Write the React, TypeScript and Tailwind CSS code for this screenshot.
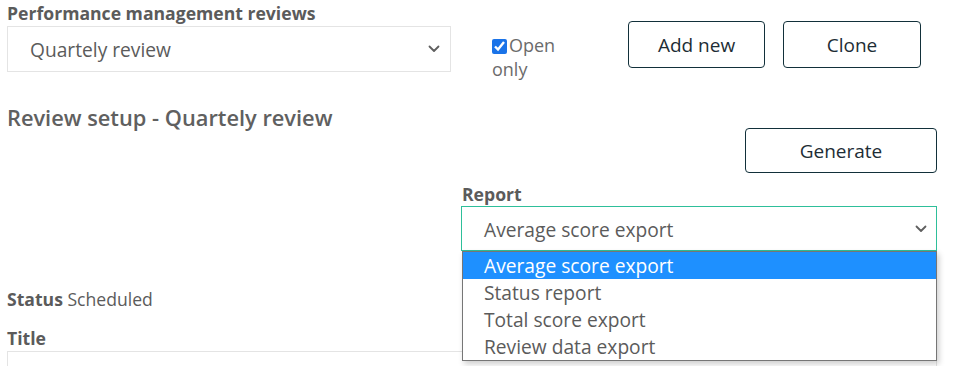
function Chevron() {
  return (
    <svg width="12" height="8" viewBox="0 0 12 8" fill="none" stroke="#5f5f5f" strokeWidth="1.8" strokeLinecap="round" strokeLinejoin="round">
      <path d="M1.5 1.5L6 6l4.5-4.5" />
    </svg>
  );
}

const reports = ["Average score export", "Status report", "Total score export", "Review data export"];

export default function App() {
  return (
    <div className="relative h-[366px] overflow-hidden bg-white pl-[7px] pr-[22px] font-['Open_Sans',sans-serif] text-[#5b5b5b]">
      {/* top row */}
      <div className="flex items-start">
        <div className="w-[444px] pt-[1px]">
          <div className="text-[17.6px] font-bold leading-[24px]">Performance management reviews</div>
          <div className="mt-px flex h-[46px] items-center justify-between border border-[#e4e4e4] pl-[22px] pr-[10px] text-[19.2px]">
            <span className="pt-[3px]">Quartely review</span>
            <Chevron />
          </div>
        </div>
        <div className="ml-[41px] mt-[33px] w-[72px] text-[18px] leading-[24px] text-[#6b6b6b]">
          <input type="checkbox" defaultChecked className="mr-[2px] h-[15px] w-[15px] align-[-2px] accent-[#1a73e8]" />
          Open only
        </div>
        <button className="ml-[64px] mt-[21px] h-[47px] w-[137px] rounded-[4px] border border-[#12303a] pt-[2px] text-[19px] text-[#1d2d35]">
          Add new
        </button>
        <button className="ml-[18px] mt-[21px] h-[47px] w-[138px] rounded-[4px] border border-[#12303a] pt-[2px] text-[19px] text-[#1d2d35]">
          Clone
        </button>
      </div>

      {/* review setup */}
      <div className="mt-[23px] flex items-start">
        <div className="flex-1 text-[21.8px] font-semibold leading-[28px] text-[#606060]">Review setup - Quartely review</div>
        <div className="flex w-[476px] flex-col">
          <button className="mt-[24px] h-[45px] w-[192px] self-end rounded-[4px] border border-[#12303a] pt-[2px] text-[19px] text-[#1d2d35]">
            Generate
          </button>
          <div className="mt-[9px] pl-px text-[17.6px] font-bold leading-[24px]">Report</div>
          <div className="relative">
            <div className="flex h-[45px] items-center justify-between border border-[#2ebf9a] pl-[22px] pr-[9px] text-[19.2px]">
              <span className="pt-[3px]">Average score export</span>
              <Chevron />
            </div>
            <div className="absolute left-px right-0 top-[45px] z-10 border border-[#767676] bg-white text-[19.2px] shadow-[2px_3px_6px_rgba(0,0,0,0.2)]">
              {reports.map((r, i) => (
                <div
                  key={r}
                  className={
                    i === 0
                      ? "h-[27px] bg-[#1e90ff] pl-[21px] leading-[27px] text-white"
                      : "h-[27px] pl-[21px] leading-[27px] text-[#5b5b5b]"
                  }
                >
                  {r}
                </div>
              ))}
            </div>
          </div>
        </div>
      </div>

      <div className="mt-[36px] text-[17.6px] leading-[24px]">
        <span className="font-bold">Status</span> Scheduled
      </div>
      <div className="mt-[15px] text-[17.6px] font-bold leading-[24px]">Title</div>
      <div className="mt-px h-[40px] border border-[#e4e4e4]" />
    </div>
  );
}
